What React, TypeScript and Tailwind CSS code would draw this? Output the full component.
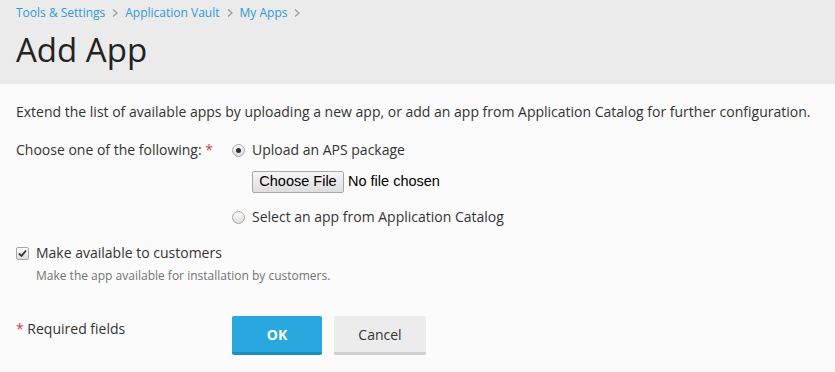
import React from "react";

function Chevron() {
  return (
    <svg width="10" height="10" viewBox="0 0 10 10" className="mx-[5px]">
      <path d="M3 1.5 L7 5 L3 8.5" fill="none" stroke="#9a9a9a" strokeWidth="1.2" />
    </svg>
  );
}

function Radio({ checked }: { checked?: boolean }) {
  return (
    <span className="w-[13px] h-[13px] mr-[7px] rounded-full border border-[#a6a6a6] bg-gradient-to-b from-[#fdfdfd] to-[#dcdcdc] flex items-center justify-center shrink-0">
      {checked && <span className="w-[5px] h-[5px] rounded-full bg-[#333]" />}
    </span>
  );
}

export default function App() {
  return (
    <div className="w-[835px] h-[372px] bg-[#fbfbfb] text-[#333] overflow-hidden" style={{ fontFamily: "'Open Sans', sans-serif" }}>
      <div className="bg-[#ebebeb] h-[84px] px-4 pt-[4px]">
        <div className="flex items-center text-[12px] leading-[18px] text-[#2d9ad6]">
          <span>Tools &amp; Settings</span>
          <Chevron />
          <span>Application Vault</span>
          <Chevron />
          <span>My Apps</span>
          <Chevron />
        </div>
        <h1 className="text-[33px] leading-[40px] mt-[8px] text-[#222]">Add App</h1>
      </div>
      <div className="px-4 pt-[18px] text-[14px]">
        <p className="leading-[20px]">Extend the list of available apps by uploading a new app, or add an app from Application Catalog for further configuration.</p>
        <div className="flex mt-[18px]">
          <div className="w-[216px] leading-[20px]">
            Choose one of the following: <span className="text-[#d63b3b]">*</span>
          </div>
          <div className="flex flex-col">
            <div className="flex items-center leading-[20px]">
              <Radio checked />
              Upload an APS package
            </div>
            <div className="flex items-center ml-[20px] mt-[11px]" style={{ fontFamily: "'Liberation Sans', Arial, sans-serif" }}>
              <span className="h-[22px] w-[92px] flex items-center justify-center border border-[#a9a9a9] rounded-[2px] bg-gradient-to-b from-[#f6f6f6] to-[#dedede] text-[14.5px] text-black">Choose File</span>
              <span className="ml-[4px] text-[14.5px] text-black">No file chosen</span>
            </div>
            <div className="flex items-center leading-[20px] mt-[14px]">
              <Radio />
              Select an app from Application Catalog
            </div>
          </div>
        </div>
        <div className="flex items-center leading-[20px] mt-[16px]">
          <span className="w-[13px] h-[13px] mr-[7px] rounded-[2px] border border-[#a6a6a6] bg-gradient-to-b from-[#fdfdfd] to-[#dcdcdc] flex items-center justify-center shrink-0">
            <svg width="9" height="9" viewBox="0 0 9 9">
              <path d="M1 4.5 L3.5 7 L8 1.5" fill="none" stroke="#333" strokeWidth="1.8" />
            </svg>
          </span>
          Make available to customers
        </div>
        <div className="ml-[20px] mt-[5px] text-[12px] leading-[16px] text-[#737373]">Make the app available for installation by customers.</div>
        <div className="flex mt-[32px]">
          <div className="w-[216px] pt-[3px] leading-[20px]">
            <span className="text-[#d63b3b]">*</span> Required fields
          </div>
          <button className="w-[90px] h-[39px] bg-[#28a8df] border-b-[3px] border-[#1f8dc0] rounded-[2px] text-white font-bold text-[14px]">OK</button>
          <button className="ml-[12px] w-[92px] h-[39px] bg-[#ececec] border-b-[3px] border-[#cfcfcf] rounded-[2px] text-[#333] text-[14px]">Cancel</button>
        </div>
      </div>
    </div>
  );
}
